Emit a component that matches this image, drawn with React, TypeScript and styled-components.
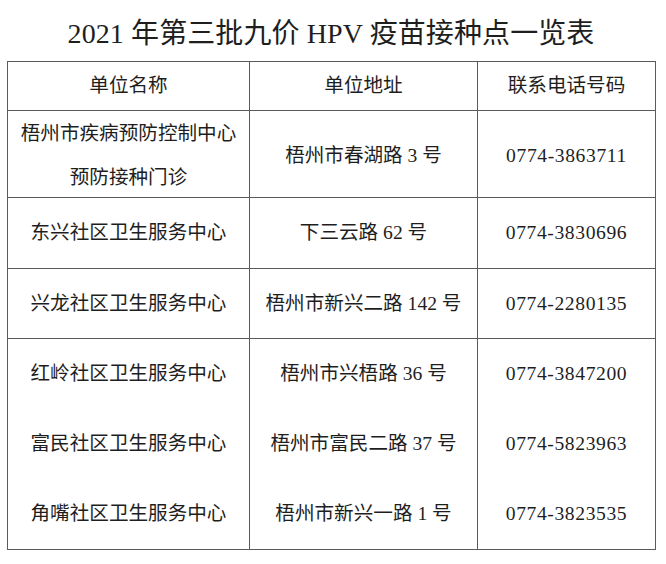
import * as React from 'react';
import styled, { createGlobalStyle } from 'styled-components';

const GlobalStyle = createGlobalStyle`
  html, body {
    margin: 0;
    padding: 0;
    background: #fff;
  }
  body {
    font-family: "Liberation Serif", "Noto Sans CJK SC", serif;
    color: #1e1e1e;
  }
`;

const Page = styled.div`
  width: 666px;
  height: 564px;
  box-sizing: border-box;
  padding: 0 11px 0 7px;
  overflow: hidden;
`;

const Title = styled.h1`
  margin: 0;
  height: 61px;
  line-height: 67px;
  font-size: 28px;
  font-weight: 400;
  text-align: center;
  letter-spacing: 0.1px;
`;

const Table = styled.table`
  width: 648px;
  border-collapse: collapse;
  table-layout: fixed;
  font-size: 19.6px;
`;

const HeadCell = styled.th`
  height: 48px;
  padding: 0;
  border: 1.5px solid #5a5a5a;
  font-weight: 400;
  text-align: center;
  line-height: 48px;
`;

const Cell = styled.td<{ $phone?: boolean }>`
  padding: 0;
  border: 1.5px solid #5a5a5a;
  text-align: center;
  vertical-align: middle;
  letter-spacing: ${(p) => (p.$phone ? '0.6px' : '0')};
`;

const Stack = styled.div<{ $h: number; $lh: number; $shift: number }>`
  height: ${(p) => p.$h}px;
  box-sizing: border-box;
  padding-top: ${(p) => p.$shift}px;
  display: flex;
  flex-direction: column;
  justify-content: center;
  align-items: center;
  line-height: ${(p) => p.$lh}px;
`;

const Line = styled.div`
  white-space: nowrap;
  flex: none;
`;

interface Row {
  names: string[];
  addresses: string[];
  phones: string[];
  height: number;
  lh: number;
  shift: number;
}

const rows: Row[] = [
  {
    names: ['梧州市疾病预防控制中心', '预防接种门诊'],
    addresses: ['梧州市春湖路 3 号'],
    phones: ['0774-3863711'],
    height: 86,
    lh: 44,
    shift: 3,
  },
  {
    names: ['东兴社区卫生服务中心'],
    addresses: ['下三云路 62 号'],
    phones: ['0774-3830696'],
    height: 70,
    lh: 44,
    shift: 0,
  },
  {
    names: ['兴龙社区卫生服务中心'],
    addresses: ['梧州市新兴二路 142 号'],
    phones: ['0774-2280135'],
    height: 69,
    lh: 44,
    shift: 0,
  },
  {
    names: ['红岭社区卫生服务中心', '富民社区卫生服务中心', '角嘴社区卫生服务中心'],
    addresses: ['梧州市兴梧路 36 号', '梧州市富民二路 37 号', '梧州市新兴一路 1 号'],
    phones: ['0774-3847200', '0774-5823963', '0774-3823535'],
    height: 210,
    lh: 70,
    shift: 0,
  },
];

export default function App() {
  return (
    <Page>
      <GlobalStyle />
      <Title>2021 年第三批九价 HPV 疫苗接种点一览表</Title>
      <Table>
        <colgroup>
          <col style={{ width: 242 }} />
          <col style={{ width: 228 }} />
          <col style={{ width: 178 }} />
        </colgroup>
        <thead>
          <tr>
            <HeadCell>单位名称</HeadCell>
            <HeadCell>单位地址</HeadCell>
            <HeadCell>联系电话号码</HeadCell>
          </tr>
        </thead>
        <tbody>
          {rows.map((r, i) => (
            <tr key={i}>
              <Cell>
                <Stack $h={r.height} $lh={r.lh} $shift={r.shift}>
                  {r.names.map((n) => (
                    <Line key={n}>{n}</Line>
                  ))}
                </Stack>
              </Cell>
              <Cell>
                <Stack $h={r.height} $lh={r.lh} $shift={r.shift}>
                  {r.addresses.map((a) => (
                    <Line key={a}>{a}</Line>
                  ))}
                </Stack>
              </Cell>
              <Cell $phone>
                <Stack $h={r.height} $lh={r.lh} $shift={r.shift}>
                  {r.phones.map((p) => (
                    <Line key={p}>{p}</Line>
                  ))}
                </Stack>
              </Cell>
            </tr>
          ))}
        </tbody>
      </Table>
    </Page>
  );
}
